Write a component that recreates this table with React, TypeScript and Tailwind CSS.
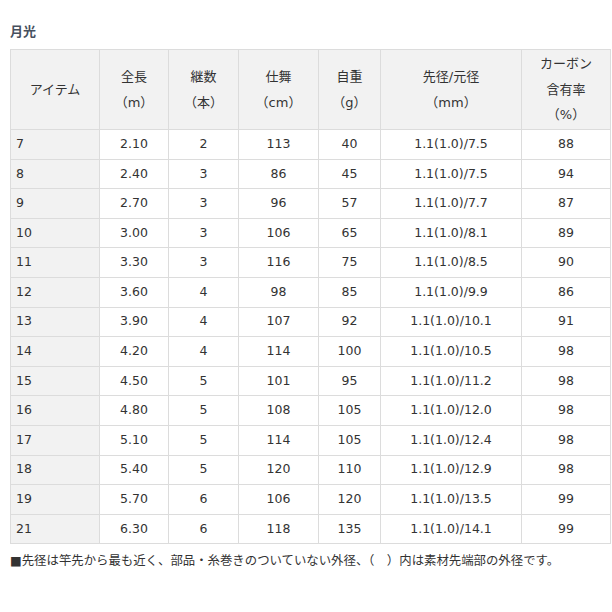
import React from 'react';

const rows: [string, string, string, string, string, string, string][] = [
  ['7', '2.10', '2', '113', '40', '1.1(1.0)/7.5', '88'],
  ['8', '2.40', '3', '86', '45', '1.1(1.0)/7.5', '94'],
  ['9', '2.70', '3', '96', '57', '1.1(1.0)/7.7', '87'],
  ['10', '3.00', '3', '106', '65', '1.1(1.0)/8.1', '89'],
  ['11', '3.30', '3', '116', '75', '1.1(1.0)/8.5', '90'],
  ['12', '3.60', '4', '98', '85', '1.1(1.0)/9.9', '86'],
  ['13', '3.90', '4', '107', '92', '1.1(1.0)/10.1', '91'],
  ['14', '4.20', '4', '114', '100', '1.1(1.0)/10.5', '98'],
  ['15', '4.50', '5', '101', '95', '1.1(1.0)/11.2', '98'],
  ['16', '4.80', '5', '108', '105', '1.1(1.0)/12.0', '98'],
  ['17', '5.10', '5', '114', '105', '1.1(1.0)/12.4', '98'],
  ['18', '5.40', '5', '120', '110', '1.1(1.0)/12.9', '98'],
  ['19', '5.70', '6', '106', '120', '1.1(1.0)/13.5', '99'],
  ['21', '6.30', '6', '118', '135', '1.1(1.0)/14.1', '99'],
];

const headers: string[][] = [
  ['アイテム'],
  ['全長', '（m）'],
  ['継数', '（本）'],
  ['仕舞', '（cm）'],
  ['自重', '（g）'],
  ['先径/元径', '（mm）'],
  ['カーボン', '含有率', '（%）'],
];

const th = 'border border-[#dcdcdc] bg-[#f2f2f2] font-normal text-center align-middle leading-[25.5px] px-1';
const td = 'border border-[#dcdcdc] text-center align-middle h-[29.6px] p-0 text-[12.5px]';

export default function App() {
  return (
    <div className="bg-white w-[612px] h-[612px] pt-[22px] pl-[10px] text-[#333] font-['DejaVu_Sans','Noto_Sans_CJK_JP',sans-serif]">
      <h2 className="text-[13px] leading-5 font-bold text-[#46505e]">月光</h2>

      <table className="mt-[7px] w-[600px] table-fixed border-collapse text-[13px]">
        <colgroup>
          <col className="w-[89px]" />
          <col className="w-[69px]" />
          <col className="w-[70px]" />
          <col className="w-[80px]" />
          <col className="w-[62px]" />
          <col className="w-[141px]" />
          <col className="w-[89px]" />
        </colgroup>
        <thead>
          <tr className="h-[80px]">
            {headers.map((lines, i) => (
              <th key={i} className={th}>
                {lines.map((l) => (
                  <div key={l}>{l}</div>
                ))}
              </th>
            ))}
          </tr>
        </thead>
        <tbody>
          {rows.map((r) => (
            <tr key={r[0]}>
              <td className={td + ' bg-[#f2f2f2] !text-left pl-[5px]'}>{r[0]}</td>
              {r.slice(1).map((c, j) => (
                <td key={j} className={td}>
                  {c}
                </td>
              ))}
            </tr>
          ))}
        </tbody>
      </table>

      {/* footnote */}
      <p className="mt-[7px] text-[12.4px] leading-5 whitespace-nowrap">
        ■先径は竿先から最も近く、部品・糸巻きのついていない外径、（　）内は素材先端部の外径です。
      </p>
    </div>
  );
}
